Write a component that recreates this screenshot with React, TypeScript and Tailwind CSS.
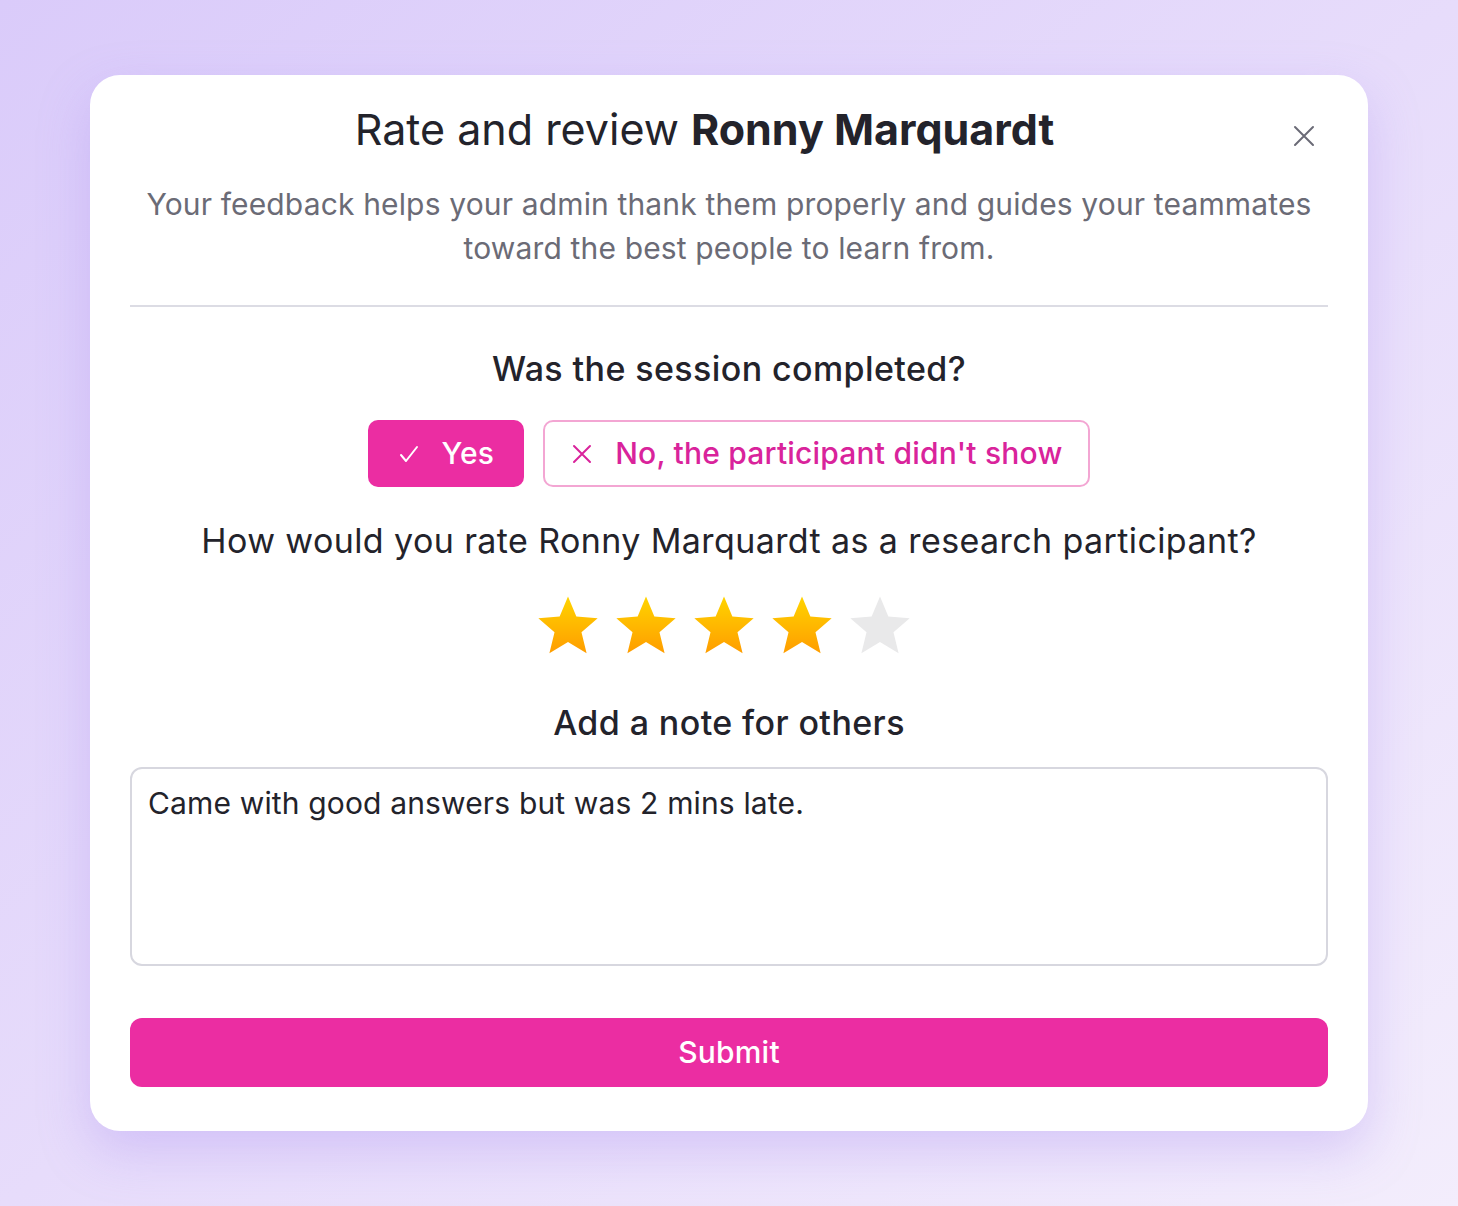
import React, { useState } from 'react';

const Star: React.FC<{ filled: boolean; id: string }> = ({ filled, id }) => (
    <svg width="66" height="62" viewBox="0 0 24 23" aria-hidden="true">
        <defs>
            <linearGradient id={id} x1="0" y1="0" x2="0" y2="1">
                <stop offset="0%" stopColor="#ffd400" />
                <stop offset="100%" stopColor="#ff9d00" />
            </linearGradient>
        </defs>
        <path
            d="M12 0.6l3.1 7.4 7.9.6-6 5.2 1.9 7.8L12 17.4l-6.9 4.2 1.9-7.8-6-5.2 7.9-.6z"
            fill={filled ? `url(#${id})` : '#e9e9ea'}
        />
    </svg>
);

const App: React.FC = () => {
    const [completed, setCompleted] = useState(true);
    const [rating, setRating] = useState(4);
    const [note, setNote] = useState('Came with good answers but was 2 mins late.');

    return (
        <div
            className="min-h-[1206px] w-full bg-gradient-to-br from-[#dacbfa] via-[#e7dcfb] to-[#f3edfc] pt-[75px] px-[90px]"
            style={{ fontFamily: 'Inter, "Noto Sans", sans-serif' }}
        >
            <div className="bg-white rounded-[30px] shadow-[0_20px_50px_rgba(170,140,240,0.35)] px-10 pt-[26px] pb-[44px]">
                <div className="flex items-start">
                    <div className="flex-1 text-center text-[43px] leading-[56px] text-[#23232b]">
                        Rate and review <span className="font-bold">Ronny Marquardt</span>
                    </div>
                    <button className="w-[49px] h-[49px] mt-[10px] flex items-center justify-center text-[#6a6a76]">
                        <svg width="22" height="22" viewBox="0 0 22 22" fill="none" stroke="currentColor" strokeWidth="2" strokeLinecap="round">
                            <path d="M2 2l18 18M20 2L2 20" />
                        </svg>
                    </button>
                </div>
                <p className="mt-[22px] text-center text-[30px] leading-[44px] tracking-[0.15px] text-[#6b6b76]">
                    Your feedback helps your admin thank them properly and guides your teammates toward the best people to learn from.
                </p>
                <div className="mt-[35px] h-[2px] bg-[#dcdce4]" />

                <h3 className="mt-[40px] text-center text-[34px] leading-[44px] tracking-[0.4px] font-medium text-[#23232b]">
                    Was the session completed?
                </h3>
                <div className="mt-[29px] flex justify-center gap-[19px]">
                    <button
                        onClick={() => setCompleted(true)}
                        className={`h-[67px] px-[30px] rounded-[10px] flex items-center gap-[22px] text-[30px] tracking-[0.2px] font-medium ${completed ? 'bg-[#eb2da2] text-white' : 'bg-white text-[#d9239b] border-2 border-[#f3a6d3]'}`}
                    >
                        <svg width="22" height="20" viewBox="0 0 22 20" fill="none" stroke="currentColor" strokeWidth="2" strokeLinecap="round" strokeLinejoin="round">
                            <path d="M3 11l5 6L19 3" />
                        </svg>
                        Yes
                    </button>
                    <button
                        onClick={() => setCompleted(false)}
                        className={`h-[67px] px-[26px] rounded-[10px] flex items-center gap-[22px] text-[30px] tracking-[0.2px] font-medium ${!completed ? 'bg-[#eb2da2] text-white' : 'bg-white text-[#d9239b] border-2 border-[#f3a6d3]'}`}
                    >
                        <svg width="22" height="22" viewBox="0 0 22 22" fill="none" stroke="currentColor" strokeWidth="2" strokeLinecap="round">
                            <path d="M3 3l16 16M19 3L3 19" />
                        </svg>
                        No, the participant didn't show
                    </button>
                </div>

                <h3 className="mt-[32px] text-center text-[34px] leading-[44px] tracking-[0.4px] text-[#23232b]">
                    How would you rate Ronny Marquardt as a research participant?
                </h3>
                <div className="mt-[32px] pr-[10px] flex justify-center gap-[12px]">
                    {[1, 2, 3, 4, 5].map(n => (
                        <button key={n} onClick={() => setRating(n)}>
                            <Star filled={n <= rating} id={`star-${n}`} />
                        </button>
                    ))}
                </div>

                <h3 className="mt-[44px] text-center text-[34px] leading-[44px] tracking-[0.4px] font-medium text-[#23232b]">
                    Add a note for others
                </h3>
                <textarea
                    value={note}
                    onChange={e => setNote(e.target.value)}
                    className="mt-[22px] block w-full h-[199px] resize-none rounded-[12px] border-2 border-[#d7d7df] px-[16px] py-[14px] text-[30px] leading-[40px] tracking-[0.15px] text-[#23232b] outline-none"
                />
                <button className="mt-[52px] w-full h-[69px] rounded-[12px] bg-[#eb2da2] text-white text-[30px] tracking-[0.2px] font-medium">
                    Submit
                </button>
            </div>
        </div>
    );
};

export default App;
